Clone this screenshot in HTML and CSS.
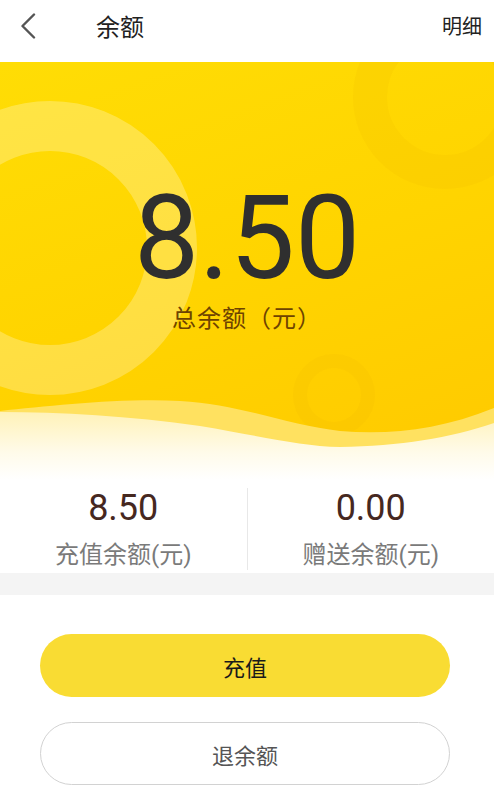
FILE: index.html
```html
<!DOCTYPE html>
<html lang="zh-CN">
<head>
    <meta charset="UTF-8">
    <title>余额</title>
    <link rel="stylesheet" href="styles.css">
</head>
<body>
<div class="page">
    <header class="topbar">
        <a class="back">
            <svg width="16" height="26" viewBox="0 0 16 26"><path d="M14 1.5 L2.5 13 L14 24.5" fill="none" stroke="#555" stroke-width="2.4" stroke-linecap="round" stroke-linejoin="round"/></svg>
        </a>
        <h1 class="title">余额</h1>
        <span class="detail">明细</span>
    </header>

    <!-- yellow banner with the total -->
    <section class="banner">
        <span class="ring ring-big"></span>
        <span class="ring ring-top"></span>
        <span class="ring ring-small"></span>
        <svg class="wave" viewBox="0 0 494 120" preserveAspectRatio="none">
            <defs>
                <linearGradient id="fade" x1="0" y1="0" x2="0" y2="1">
                    <stop offset="0" stop-color="#fff2b8"/>
                    <stop offset="0.6" stop-color="#fffbea"/>
                    <stop offset="1" stop-color="#ffffff"/>
                </linearGradient>
            </defs>
            <path d="M0,51 C50,46 120,38 180,41 C240,44 290,66 340,71 C390,75 440,70 494,48 V120 H0 Z" fill="#ffe160"/>
            <path d="M0,52 C60,52 130,56 200,66 C260,76 300,86 340,87 C400,86 450,78 494,63 V120 H0 Z" fill="url(#fade)"/>
        </svg>
        <div class="total">
            <div class="total-num">8.50</div>
            <div class="total-label">总余额（元）</div>
        </div>
    </section>

    <section class="stats">
        <div class="stat">
            <div class="stat-num">8.50</div>
            <div class="stat-label">充值余额(元)</div>
        </div>
        <div class="stat stat-right">
            <div class="stat-num">0.00</div>
            <div class="stat-label">赠送余额(元)</div>
        </div>
    </section>

    <div class="band"></div>

    <div class="actions">
        <button class="btn btn-primary">充值</button>
        <button class="btn btn-outline">退余额</button>
    </div>
</div>
</body>
</html>
```
FILE: styles.css
```css
body {
    margin: 0;
    padding: 0;
    background-color: #fff;
    font-family: Roboto, "Noto Sans CJK SC", sans-serif;
}
.page {
    width: 494px;
    background-color: #fff;
}
.topbar {
    display: flex;
    align-items: center;
    height: 51px;
    padding-bottom: 11px;
    background-color: #fff;
}
.back {
    display: flex;
    margin-left: 20px;
}
.title {
    margin: 0 0 0 60px;
    font-size: 24px;
    font-weight: normal;
    color: #222;
}
.detail {
    margin-left: auto;
    padding-right: 12px;
    font-size: 20px;
    color: #222;
}
/* banner */
.banner {
    position: relative;
    height: 300px;
    padding-top: 118px;
    overflow: hidden;
    background: linear-gradient(160deg, #ffdd05 0%, #ffd400 50%, #ffc900 100%);
}
.ring {
    position: absolute;
    border-radius: 50%;
    box-sizing: border-box;
}
.ring-big {
    left: -97px;
    top: 39px;
    width: 294px;
    height: 294px;
    border: 50px solid rgba(255, 255, 255, 0.26);
}
.ring-top {
    left: 353px;
    top: -57px;
    width: 184px;
    height: 184px;
    border: 34px solid rgba(230, 165, 0, 0.1);
}
.ring-small {
    left: 293px;
    top: 292px;
    width: 82px;
    height: 82px;
    border: 14px solid rgba(235, 175, 0, 0.13);
}
.wave {
    position: absolute;
    left: 0;
    bottom: 0;
    width: 494px;
    height: 120px;
}
.total {
    position: relative;
    text-align: center;
}
.total-num {
    font-size: 116px;
    line-height: 116px;
    color: #2f2f2f;
}
.total-label {
    margin-top: 8px;
    font-size: 24px;
    line-height: 30px;
    letter-spacing: 1px;
    color: #6e4300;
}
/* two balances */
.stats {
    display: flex;
    padding: 8px 0 3px;
}
.stat {
    flex: 1;
    text-align: center;
}
.stat-right {
    border-left: 1px solid #e8e8e8;
}
.stat-num {
    font-size: 36px;
    line-height: 40px;
    color: #46281f;
}
.stat-label {
    margin-top: 12px;
    font-size: 24px;
    line-height: 30px;
    color: #7a7a7a;
}
.band {
    height: 22px;
    background-color: #f4f4f4;
}
.actions {
    display: flex;
    flex-direction: column;
    gap: 25px;
    padding: 39px 44px 0 40px;
}
.btn {
    height: 63px;
    border-radius: 32px;
    font-family: "Noto Sans CJK SC", sans-serif;
    font-size: 22px;
    cursor: pointer;
}
.btn-primary {
    background-color: #f9dc33;
    border: none;
    color: #1a1a1a;
}
.btn-outline {
    background-color: #fff;
    border: 1px solid #d2d2d2;
    color: #555;
}
```
